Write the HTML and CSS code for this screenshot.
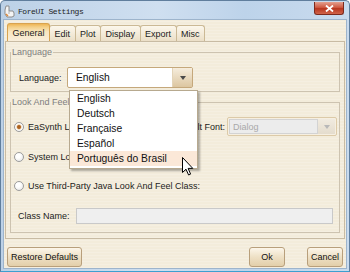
FILE: index.html
```html
<!DOCTYPE html>
<html>
<head>
<title>ForeUI Settings</title>
<link rel="stylesheet" href="styles.css">
</head>
<body>
<div class="window">
    <div class="titlebar">
        <svg class="app-icon" width="11" height="13" viewBox="0 0 11 13">
            <path d="M2 1 L5 1 L5 6 L9 6 L10 8 L10 11 L8 12 L3 12 L1 9 L1 5 Z" fill="#f4f4f4" stroke="#8c8c8c" stroke-width="1"/>
            <path d="M5 6 L5 9" stroke="#b0b0b0" stroke-width="1"/>
            <path d="M2 9 L4 11" stroke="#e08a3a" stroke-width="1.4"/>
        </svg>
        <span class="title">ForeUI Settings</span>
        <div class="close">
            <svg width="9" height="7" viewBox="0 0 9 7">
                <path d="M1 0.5 L8 6.5 M8 0.5 L1 6.5" stroke="#fff" stroke-width="1.8"/>
            </svg>
        </div>
    </div>
    <div class="client">
        <div class="tabs">
            <div class="tab active">General</div>
            <div class="tab">Edit</div>
            <div class="tab">Plot</div>
            <div class="tab">Display</div>
            <div class="tab">Export</div>
            <div class="tab">Misc</div>
        </div>
        <div class="panel">
            <fieldset class="group">
                <legend>Language</legend>
                <div class="group-body lang-body">
                    <div class="row">
                        <span class="label lang-label">Language:</span>
                        <div class="combo">
                            <span class="combo-text">English</span>
                            <span class="combo-btn"></span>
                        </div>
                    </div>
                </div>
            </fieldset>
            <fieldset class="group">
                <legend>Look And Feel</legend>
                <div class="group-body laf-body">
                    <div class="row row-first">
                        <span class="radio on"></span>
                        <span class="label radio-label">EaSynth Look And Feel</span>
                        <span class="label font-label">Default Font:</span>
                        <div class="combo disabled">
                            <span class="combo-text">Dialog</span>
                            <span class="combo-btn"></span>
                        </div>
                    </div>
                    <div class="row row-radio">
                        <span class="radio"></span>
                        <span class="label radio-label">System Look And Feel</span>
                    </div>
                    <div class="row row-radio row-third">
                        <span class="radio"></span>
                        <span class="label radio-label">Use Third-Party Java Look And Feel Class:</span>
                    </div>
                    <div class="row row-class">
                        <span class="label class-label">Class Name:</span>
                        <div class="field"></div>
                    </div>
                </div>
            </fieldset>
        </div>
        <div class="footer">
            <button class="btn btn-restore">Restore Defaults</button>
            <button class="btn btn-ok">Ok</button>
            <button class="btn btn-cancel">Cancel</button>
        </div>
    </div>

    <ul class="dropdown">
        <li>English</li>
        <li>Deutsch</li>
        <li>Française</li>
        <li>Español</li>
        <li class="hover">Português do Brasil</li>
    </ul>
    <svg class="cursor" width="12" height="19" viewBox="0 0 12 19">
        <path d="M0.5 0.5 L0.5 15.5 L4 12.2 L6.6 18 L8.6 17.1 L6.1 11.4 L10.8 11.4 Z" fill="#fff" stroke="#000" stroke-width="1"/>
    </svg>
</div>
</body>
</html>
```

FILE: styles.css
```css
html, body {
    margin: 0;
    padding: 0;
}
body {
    font-family: "Liberation Sans", Arial, sans-serif;
    font-size: 9px;
    color: #1c1c1c;
}

.window {
    position: relative;
    width: 350px;
    height: 272px;
    box-sizing: border-box;
    display: flex;
    flex-direction: column;
    padding: 0 3px 3px;
    border: 1px solid #607e9d;
    border-bottom-color: #3d9fd0;
    border-radius: 5px 5px 0 0;
    background: linear-gradient(90deg, #bcd1e7, #cfdff0 45%, #bdd3ea 70%, #c9dbee);
    overflow: hidden;
}

/* title bar */
.titlebar {
    height: 19px;
    display: flex;
    align-items: center;
    flex-shrink: 0;
}
.app-icon {
    display: block;
    margin-top: 1px;
}
.title {
    margin-left: 3px;
    margin-top: 1px;
    font-family: "Liberation Mono", "Courier New", monospace;
    font-size: 8px;
    letter-spacing: -0.45px;
    color: #1e1e1e;
}
.close {
    align-self: flex-start;
    margin: 1px 2px 0 auto;
    width: 30px;
    height: 13px;
    box-sizing: border-box;
    border: 1px solid #7d2a1d;
    border-top: none;
    border-radius: 0 0 3px 3px;
    background: linear-gradient(#e3a08f, #cf5a43 45%, #b8361f 55%, #d0644a);
    display: flex;
    align-items: center;
    justify-content: center;
}
.close svg {
    display: block;
}

/* client area */
.client {
    flex: 1;
    display: flex;
    flex-direction: column;
    background-color: #f3ecdb;
    background-image: repeating-linear-gradient(0deg, rgba(255,255,255,.18) 0 1px, transparent 1px 3px);
    box-shadow: 0 0 0 1px #9db4cc;
}

.tabs {
    display: flex;
    align-items: flex-end;
    height: 18px;
    padding: 3px 0 0 3px;
    flex-shrink: 0;
}
.tab {
    height: 16px;
    box-sizing: border-box;
    padding: 0 4.5px;
    margin-right: -1px;
    border: 1px solid #cbb995;
    border-bottom: none;
    border-radius: 3px 3px 0 0;
    background: linear-gradient(#fcf7ec, #ebdfc7);
    display: flex;
    align-items: center;
    white-space: nowrap;
}
.tab.active {
    height: 18px;
    position: relative;
    z-index: 1;
    border-color: #d8a34f;
    background: linear-gradient(#eeb555 0, #f4cf86 3px, #f9e6bf 45%, #f8eedb);
}

.panel {
    margin: 0 1px;
    padding: 0 4px 5px;
    border: 1px solid #c8bba3;
}

.group {
    margin: 5px 0 0;
    padding: 0;
    min-width: 0;
    border: 1px solid #cdc3b0;
}
.group legend {
    padding: 0 1px;
    font-size: 9px;
    line-height: 10px;
    color: #7e7e7e;
}
.lang-body {
    padding: 10px 8px 3px;
}
.laf-body {
    padding: 10px 2px 8px 3px;
}

.row {
    display: flex;
    align-items: center;
}
.label {
    white-space: nowrap;
}
.lang-label {
    width: 48px;
}

.combo {
    width: 126px;
    height: 21px;
    box-sizing: border-box;
    display: flex;
    border: 1px solid #c5a87b;
    border-radius: 2px;
    background: #fff;
}
.combo-text {
    flex: 1;
    padding-left: 8px;
    font-size: 10.3px;
    line-height: 19px;
    color: #111;
}
.combo-btn {
    width: 19px;
    display: flex;
    align-items: center;
    justify-content: center;
    border-left: 1px solid #e3d4b8;
    background: linear-gradient(#f6eddd, #dcc6a0);
}
.combo-btn::after {
    content: "";
    border-left: 3.5px solid transparent;
    border-right: 3.5px solid transparent;
    border-top: 4px solid #4a4a4a;
}

.combo.disabled {
    width: 110px;
    height: 19px;
    padding: 1px;
    border-color: #dccaa8;
    background: #f6efe1;
}
.combo.disabled .combo-text {
    padding-left: 3px;
    font-size: 9px;
    line-height: 15px;
    color: #a9a9a9;
    background: #ececec;
    border: 1px solid #d3d3d3;
}
.combo.disabled .combo-btn {
    width: 17px;
    border-left: none;
    background: linear-gradient(#f1ebe0, #e4dccd);
}
.combo.disabled .combo-btn::after {
    border-top-color: #b8b8b8;
}

.row-first {
    height: 19px;
}
.radio-label {
    margin-left: 4px;
}
.font-label {
    margin-left: auto;
    margin-right: 2px;
}
.row-radio {
    height: 18px;
    margin-top: 12px;
}
.row-third {
    margin-top: 11px;
}
.row-class {
    height: 16px;
    margin-top: 13px;
}
.class-label {
    width: 58px;
    margin-left: 4px;
}
.field {
    flex: 1;
    height: 16px;
    box-sizing: border-box;
    margin-right: 4px;
    background: #efefef;
    border: 1px solid #c9c9c9;
}

.radio {
    width: 10px;
    height: 10px;
    box-sizing: border-box;
    flex-shrink: 0;
    border-radius: 50%;
    border: 1px solid #9c9c9c;
    background: radial-gradient(circle at 40% 35%, #fff 0, #fff 30%, #e2e2e2 100%);
}
.radio.on {
    background: radial-gradient(circle, #9a561c 0, #b8702e 1.6px, #f6e7d2 2.6px, #fff 3.2px, #e2e2e2 100%);
}

/* buttons */
.footer {
    display: flex;
    padding: 8px 3px 0;
}
.btn {
    height: 20px;
    box-sizing: border-box;
    padding: 0;
    border: 1px solid #b89f7b;
    border-radius: 3px;
    background: linear-gradient(#fcf6ea, #eee0c5 50%, #e3cfaa);
    font-family: "Liberation Sans", Arial, sans-serif;
    font-size: 9px;
    color: #111;
}
.btn-restore {
    width: 75px;
}
.btn-ok {
    width: 36px;
    margin-left: auto;
    margin-right: 22px;
}
.btn-cancel {
    width: 36px;
}

/* open combo list */
.dropdown {
    position: absolute;
    left: 68px;
    top: 89px;
    width: 129px;
    box-sizing: border-box;
    margin: 0;
    padding: 0 0 2px;
    list-style: none;
    background: #fff;
    border: 1px solid #b7a98f;
    box-shadow: 2px 2px 2px rgba(0,0,0,.3);
    font-size: 10.3px;
    color: #111;
    z-index: 5;
}
.dropdown li {
    height: 15px;
    line-height: 15px;
    padding-left: 7px;
    white-space: nowrap;
}
.dropdown li.hover {
    background: #fbe8d8;
}

.cursor {
    position: absolute;
    left: 181px;
    top: 156px;
    z-index: 6;
}
```
